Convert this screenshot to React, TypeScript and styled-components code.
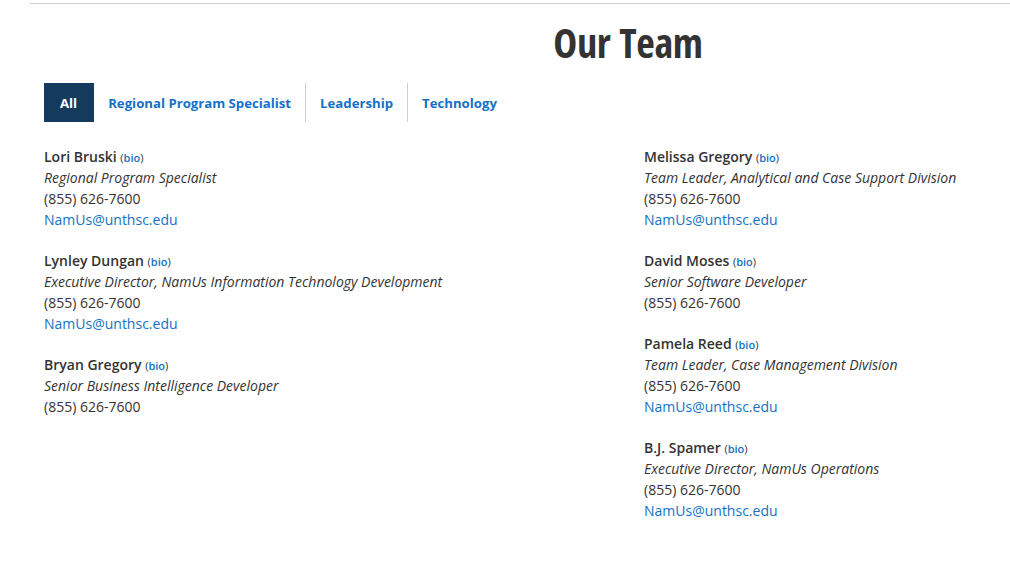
import React from 'react';
import styled, { createGlobalStyle } from 'styled-components';

type Member = {
  name: string;
  title: string;
  phone: string;
  email?: string;
};

const left: Member[] = [
  { name: 'Lori Bruski', title: 'Regional Program Specialist', phone: '(855) 626-7600', email: 'NamUs@unthsc.edu' },
  {
    name: 'Lynley Dungan',
    title: 'Executive Director, NamUs Information Technology Development',
    phone: '(855) 626-7600',
    email: 'NamUs@unthsc.edu',
  },
  { name: 'Bryan Gregory', title: 'Senior Business Intelligence Developer', phone: '(855) 626-7600' },
];

const right: Member[] = [
  {
    name: 'Melissa Gregory',
    title: 'Team Leader, Analytical and Case Support Division',
    phone: '(855) 626-7600',
    email: 'NamUs@unthsc.edu',
  },
  { name: 'David Moses', title: 'Senior Software Developer', phone: '(855) 626-7600' },
  {
    name: 'Pamela Reed',
    title: 'Team Leader, Case Management Division',
    phone: '(855) 626-7600',
    email: 'NamUs@unthsc.edu',
  },
  {
    name: 'B.J. Spamer',
    title: 'Executive Director, NamUs Operations',
    phone: '(855) 626-7600',
    email: 'NamUs@unthsc.edu',
  },
];

const tabs = ['All', 'Regional Program Specialist', 'Leadership', 'Technology'];

export default function App() {
  return (
    <>
      <GlobalStyle />
      <Page>
        <Title>Our Team</Title>
        <Tabs>
          {tabs.map((t, i) => (
            <Tab key={t} $active={i === 0} $divider={i > 1}>
              {t}
            </Tab>
          ))}
        </Tabs>
        <Columns>
          {[left, right].map((col, ci) => (
            <Column key={ci}>
              {col.map((m) => (
                <Entry key={m.name}>
                  <Name>
                    {m.name} <Bio>(<a href="#">bio</a>)</Bio>
                  </Name>
                  <Role>{m.title}</Role>
                  <div>{m.phone}</div>
                  {m.email && <Email href="#">{m.email}</Email>}
                </Entry>
              ))}
            </Column>
          ))}
        </Columns>
      </Page>
    </>
  );
}

const GlobalStyle = createGlobalStyle`
  body {
    margin: 0;
    background: #fff;
    font-family: 'Open Sans', 'Liberation Sans', sans-serif;
    color: #333;
  }
`;

const Page = styled.div`
  margin: 3px 0 0 30px;
  border-top: 1px solid #cfcfcf;
`;

const Title = styled.h1`
  margin: 16px 0 0;
  padding-left: 216px;
  text-align: center;
  font-size: 40.5px;
  line-height: 46px;
  font-weight: 700;
  font-stretch: 75%;
  color: #333;
  letter-spacing: -0.4px;
  word-spacing: 2px;
`;

const Tabs = styled.ul`
  display: flex;
  list-style: none;
  margin: 17px 0 0 14px;
  padding: 0;
`;

const Tab = styled.li<{ $active?: boolean; $divider?: boolean }>`
  height: 39px;
  display: flex;
  align-items: center;
  padding: ${(p) => (p.$active ? '0 17px 0 16px' : '0 14px')};
  font-size: 13.2px;
  font-weight: 700;
  background: ${(p) => (p.$active ? '#143b5e' : 'transparent')};
  color: ${(p) => (p.$active ? '#fff' : '#1571c7')};
  border-left: ${(p) => (p.$divider ? '1px solid #d0d0d0' : 'none')};
`;

const Columns = styled.div`
  display: grid;
  grid-template-columns: 600px 1fr;
  margin: 24px 0 0 14px;
`;

const Column = styled.div`
  display: flex;
  flex-direction: column;
  gap: 20px;
`;

const Entry = styled.div`
  font-size: 14px;
  line-height: 21px;
`;

const Name = styled.div`
  font-weight: 600;
`;

const Bio = styled.span`
  font-size: 11px;
  line-height: 1;
  font-weight: 400;

  a {
    color: #1571c7;
    text-decoration: none;
    font-weight: 600;
  }
`;

const Role = styled.div`
  font-style: italic;
`;

const Email = styled.a`
  display: block;
  color: #1571c7;
  text-decoration: none;
`;
